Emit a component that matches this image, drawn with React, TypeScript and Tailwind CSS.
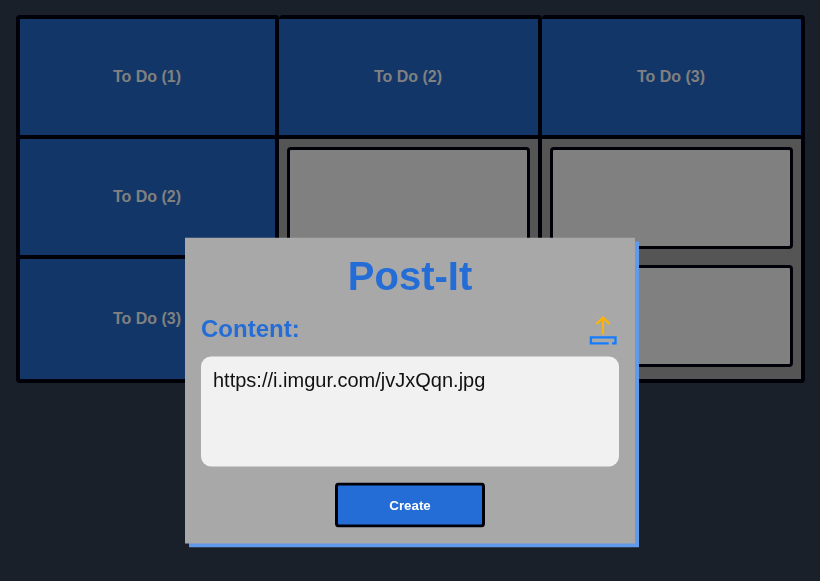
const columns = ["To Do (2)", "To Do (3)"];

function UploadIcon() {
  return (
    <svg width="32" height="36" viewBox="0 0.7 32 36" fill="none" strokeLinejoin="miter">
      <path d="M16 24.6V7.8M9.5 14.1L16 7.8L22.5 14.1" stroke="#fcb40c" strokeWidth="2.2" />
      <path d="M21.7 33.5H3.9V27.5H28.5V33.5H25" stroke="#147cfc" strokeWidth="2.3" />
    </svg>
  );
}

function Header({ label }: { label: string }) {
  return (
    <div className="flex h-[124px] items-center justify-center rounded-t-[4px] border-y-4 border-r-4 border-[#000009] bg-[#133668] pr-px">
      {label}
    </div>
  );
}

function Card() {
  return <div className="h-[102px] rounded-[4px] border-[3px] border-[#000009] bg-[#808080]" />;
}

export default function App() {
  return (
    <div className="relative h-[581px] w-[820px] overflow-hidden bg-[#1a2029] pl-4 pt-[15px] font-['Liberation_Sans',Arial,sans-serif]">
      <div className="flex w-[789px] text-base font-bold text-[#808080]">
        <div className="w-[263px] overflow-hidden rounded-[4px] border-l-4 border-[#000009] bg-[#000009]">
          <div className="flex h-[124px] items-center justify-center border-y-4 border-r-4 border-[#000009] bg-[#133668] pr-px">
            To Do (1)
          </div>
          <div className="flex h-[120px] items-center justify-center border-b-4 border-r-4 border-[#000009] bg-[#133668] pr-px">
            To Do (2)
          </div>
          <div className="flex h-[124px] items-center justify-center border-b-4 border-r-4 border-[#000009] bg-[#133668] pr-px">
            To Do (3)
          </div>
        </div>
        {columns.map((label) => (
          <div key={label} className="w-[263px]">
            <Header label={label} />
            <div className="flex h-[244px] flex-col gap-4 rounded-b-[4px] border-b-4 border-r-4 border-[#000009] bg-[#555555] p-2">
              <Card />
              <Card />
            </div>
          </div>
        ))}
      </div>

      <div className="absolute left-1/2 top-[391px] flex h-[306px] w-[450px] -translate-x-1/2 translate-y-[-153.5px] flex-col bg-[#a8a8a8] p-4 shadow-[4px_4px_0_#629aea] will-change-transform">
        <h1 className="h-[46px] text-center text-[40px] font-bold leading-[44px] text-[#246dd6]">Post-It</h1>
        <div className="flex h-[57px] items-center justify-between">
          <h2 className="text-2xl font-bold leading-[27px] text-[#246dd6]">Content:</h2>
          <UploadIcon />
        </div>
        <textarea
          className="block h-[110px] w-full shrink-0 resize-none rounded-[10px] bg-[#f1f1f1] p-3 text-[20px] leading-[23px] text-[#111111] outline-none"
          defaultValue="https://i.imgur.com/jvJxQqn.jpg"
        />
        <button className="mx-auto mt-4 h-[45px] w-[150px] shrink-0 rounded-[4px] border-[3px] border-[#000009] bg-[#246dd6] text-[13.333px] font-bold text-white">
          Create
        </button>
      </div>
    </div>
  );
}
